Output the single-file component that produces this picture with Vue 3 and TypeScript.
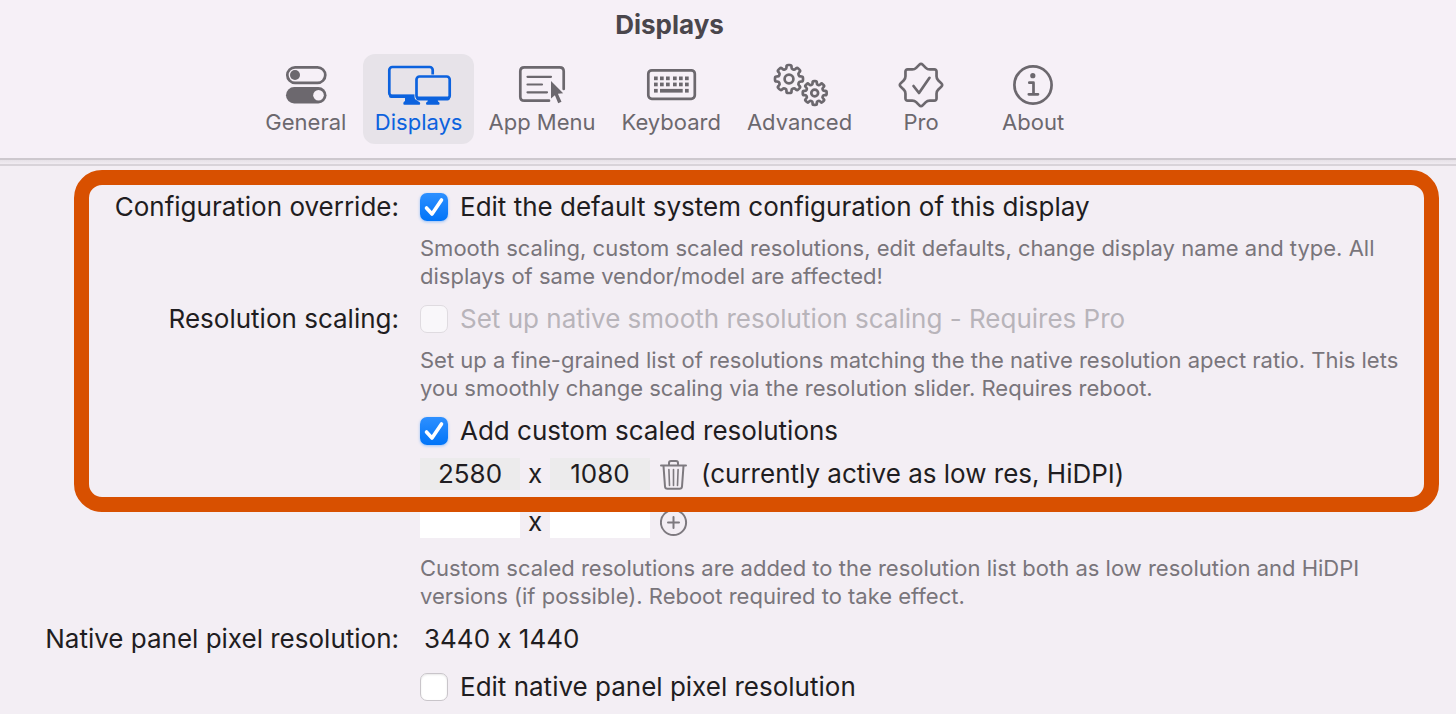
<script setup lang="ts">
import { ref } from 'vue'

type TabId = 'general' | 'displays' | 'menu' | 'keyboard' | 'advanced' | 'pro' | 'about'

const tabs: { id: TabId; label: string }[] = [
  { id: 'general', label: 'General' },
  { id: 'displays', label: 'Displays' },
  { id: 'menu', label: 'App Menu' },
  { id: 'keyboard', label: 'Keyboard' },
  { id: 'advanced', label: 'Advanced' },
  { id: 'pro', label: 'Pro' },
  { id: 'about', label: 'About' },
]

const active = ref<TabId>('displays')
const overrideConfig = ref(true)
const smoothScaling = ref(false)
const customResolutions = ref(true)
const editNative = ref(false)
const width = ref('2580')
const height = ref('1080')
const newWidth = ref('')
const newHeight = ref('')

type Point = [number, number]

const polar = (cx: number, cy: number, r: number, deg: number): Point => {
  const a = (deg * Math.PI) / 180
  return [cx + r * Math.sin(a), cy - r * Math.cos(a)]
}

/* Closed polygon whose corners are rounded by the share t of each edge */
const rounded = (pts: Point[], t: number): string => {
  const n = pts.length
  const mix = (a: Point, b: Point) =>
    `${(a[0] + (b[0] - a[0]) * t).toFixed(2)} ${(a[1] + (b[1] - a[1]) * t).toFixed(2)}`
  return (
    pts
      .map((p, i) => {
        const prev = pts[(i + n - 1) % n]
        const next = pts[(i + 1) % n]
        return `${i ? 'L' : 'M'}${mix(p, prev)}Q${p[0].toFixed(2)} ${p[1].toFixed(2)} ${mix(p, next)}`
      })
      .join('') + 'Z'
  )
}

const gear = (cx: number, cy: number, outer: number, inner: number): string => {
  const pts: Point[] = []
  for (let i = 0; i < 8; i++) {
    const d = i * 45
    pts.push(
      polar(cx, cy, inner, d - 14),
      polar(cx, cy, outer, d - 10),
      polar(cx, cy, outer, d + 10),
      polar(cx, cy, inner, d + 14),
    )
  }
  return rounded(pts, 0.35)
}

const badge = (cx: number, cy: number, outer: number, inner: number): string => {
  const pts: Point[] = []
  for (let i = 0; i < 8; i++) {
    pts.push(polar(cx, cy, outer, i * 45), polar(cx, cy, inner, i * 45 + 22.5))
  }
  return rounded(pts, 0.25)
}

const keyColumns = [16, 22, 28, 35, 41, 47]
</script>

<template>
  <div class="window">
    <header class="toolbar">
      <h1>Displays</h1>
      <nav class="tabs" aria-label="Settings">
        <button
          v-for="tab in tabs"
          :key="tab.id"
          type="button"
          class="tab"
          :class="{ active: active === tab.id }"
          @click="active = tab.id"
        >
          <svg class="tab-icon" viewBox="0 0 66 46" aria-hidden="true">
            <g v-if="tab.id === 'general'">
              <rect class="line" x="14.3" y="5.3" width="38" height="15.6" rx="7.8" />
              <circle class="solid" cx="22" cy="13" r="5" />
              <rect class="solid" x="13" y="25" width="40.5" height="16.4" rx="8.2" />
              <circle class="paper" cx="45.5" cy="33.2" r="5.3" />
            </g>
            <g v-else-if="tab.id === 'displays'">
              <rect class="line" x="3.3" y="5" width="43.4" height="29" rx="3" />
              <path class="solid" d="M3 32.5h27v3.500H5q-2 0-2-2z" />
              <path class="solid" d="M19 35h12l.6 4q2.600.7 2.600 2.300 0 1.500-1 1.500H18.300q-1 0-1-1.500 0-1.600 1.700-2.300z" />
              <rect class="cut" x="28.500" y="12.500" width="37" height="26" rx="4" />
              <rect class="line" x="30.500" y="14.500" width="33.200" height="22.200" rx="3" />
              <path class="solid" d="M30 34.500h34v1q0 3-2.500 3h-29q-2.500 0-2.500-3zM42 37.500h9.500l.5 2q1.600.6 1.600 1.800 0 1.500-1 1.500H41q-1 0-1-1.500 0-1.200 1.600-1.800z" />
            </g>
            <g v-else-if="tab.id === 'menu'">
              <path class="line" d="M40 38.700H15.300q-4 0-4-4V9.300q0-4 4-4h35.400q4 0 4 4V27" />
              <path class="rule" d="M18.500 14.800H42M18.500 22.500H33M18.500 30.300H38" />
              <path class="solid" d="M42 19 54.200 31.300 48.900 31.700 52.500 39.800 49.200 41.300 45.900 33.200 42 36.500z" />
            </g>
            <g v-else-if="tab.id === 'keyboard'">
              <rect class="line" x="10.300" y="8.300" width="46.500" height="28.500" rx="3.500" />
              <template v-for="x in keyColumns" :key="x">
                <rect class="solid" :x="x" y="14.500" width="3.700" height="3.700" />
                <rect class="solid" :x="x" y="20.600" width="3.700" height="3.700" />
              </template>
              <rect class="solid" x="16" y="26.900" width="3.700" height="3.700" />
              <rect class="solid" x="22" y="26.900" width="22.700" height="3.700" />
              <rect class="solid" x="47" y="26.900" width="3.700" height="3.700" />
            </g>
            <g v-else-if="tab.id === 'advanced'">
              <path class="line" :d="gear(22, 17, 14.200, 10.600)" />
              <circle class="line" cx="22" cy="17" r="4.400" />
              <path class="line" :d="gear(47.700, 31, 12.100, 8.800)" />
              <circle class="line" cx="47.700" cy="31" r="3.400" />
            </g>
            <g v-else-if="tab.id === 'pro'">
              <path class="line" :d="badge(33, 23, 22, 16.800)" />
              <path class="line" d="M25.500 24 31 31 41.500 15.800" />
            </g>
            <g v-else>
              <circle class="line" cx="33" cy="23" r="18.600" />
              <circle class="solid" cx="32.800" cy="13.700" r="2.600" />
              <path class="line" d="M29.300 20.700H33.500V32.300M28.800 32.300H38" />
            </g>
          </svg>
          <span>{{ tab.label }}</span>
        </button>
      </nav>
    </header>
    <div class="divider"></div>

    <main>
      <section class="highlight">
        <div class="row">
          <span class="label">Configuration override:</span>
          <div class="content">
            <label class="check">
              <input v-model="overrideConfig" type="checkbox" />
              Edit the default system configuration of this display
            </label>
            <p class="hint">
              Smooth scaling, custom scaled resolutions, edit defaults, change display name and type. All
              displays of same vendor/model are affected!
            </p>
          </div>
        </div>
        <div class="row">
          <span class="label">Resolution scaling:</span>
          <div class="content">
            <label class="check disabled">
              <input v-model="smoothScaling" type="checkbox" disabled />
              Set up native smooth resolution scaling - Requires Pro
            </label>
            <p class="hint">
              Set up a fine-grained list of resolutions matching the the native resolution apect ratio. This lets
              you smoothly change scaling via the resolution slider. Requires reboot.
            </p>
            <label class="check">
              <input v-model="customResolutions" type="checkbox" />
              Add custom scaled resolutions
            </label>
            <div class="fields existing">
              <input v-model="width" type="text" aria-label="Width" readonly />
              <span class="times">x</span>
              <input v-model="height" type="text" aria-label="Height" readonly />
              <button type="button" class="icon-button" aria-label="Remove resolution">
                <svg viewBox="0 0 28 32" aria-hidden="true">
                  <path d="M1 7.500H26M9 7V5Q9 3 11 3H16Q18 3 18 5V7M3.500 8 5 28.500Q5.200 30.800 7.400 30.800H19.600Q21.800 30.800 22 28.500L23.500 8" />
                  <path class="fine" d="M8.900 11.500 9.500 27.500M13.500 11.500V27.500M18.100 11.500 17.500 27.500" />
                </svg>
              </button>
              <span>(currently active as low res, HiDPI)</span>
            </div>
          </div>
        </div>
      </section>

      <div class="row">
        <div class="content">
          <div class="fields">
            <input v-model="newWidth" type="text" aria-label="New width" />
            <span class="times">x</span>
            <input v-model="newHeight" type="text" aria-label="New height" />
            <button type="button" class="icon-button" aria-label="Add resolution">
              <svg viewBox="0 0 28 32" aria-hidden="true">
                <circle cx="13.500" cy="16.500" r="12.600" />
                <path d="M13.500 11V22M8 16.500H19" />
              </svg>
            </button>
          </div>
          <p class="hint spaced">
            Custom scaled resolutions are added to the resolution list both as low resolution and HiDPI
            versions (if possible). Reboot required to take effect.
          </p>
        </div>
      </div>
      <div class="row">
        <span class="label">Native panel pixel resolution:</span>
        <div class="content">
          <div class="value">3440 x 1440</div>
          <label class="check native">
            <input v-model="editNative" type="checkbox" />
            Edit native panel pixel resolution
          </label>
        </div>
      </div>
    </main>
  </div>
</template>

<style>
body {
  background: #f3eef4;
}
</style>

<style scoped>
.window {
  box-sizing: border-box;
  min-height: 100vh;
  background: #f3eef4;
  color: #1f1d21;
  font-family: Inter, 'Liberation Sans', sans-serif;
  font-size: 26px;
  font-variant-ligatures: no-contextual;
  line-height: 32px;
}

.toolbar {
  display: flex;
  flex-direction: column;
  align-items: center;
  padding: 9px 117px 14px 0;
  background: #f6f0f7;
  border-bottom: 2px solid #cdc8ce;
}

h1 {
  margin: 0 0 13px;
  font-size: 26px;
  font-weight: 700;
  line-height: 32px;
  color: #4a464c;
}

.tabs {
  display: flex;
  gap: 2px;
}

.tab {
  --paper: #f6f0f7;
  display: flex;
  flex-direction: column;
  align-items: center;
  min-width: 110px;
  padding: 8px 12px;
  border: 0;
  border-radius: 12px;
  background: none;
  color: #6c686e;
  font: inherit;
  font-size: 22px;
  line-height: 28px;
  white-space: nowrap;
}

.tab.active {
  --paper: #e7e3e9;
  background: #e7e3e9;
  color: #0c62de;
}

.tab-icon {
  width: 66px;
  height: 46px;
  overflow: visible;
}

.line,
.rule {
  fill: none;
  stroke: currentColor;
  stroke-width: 2.7;
  stroke-linecap: round;
  stroke-linejoin: round;
}

.rule {
  stroke-width: 2.2;
}

.solid {
  fill: currentColor;
}

.paper,
.cut {
  fill: var(--paper);
}

.divider {
  height: 4px;
  background: linear-gradient(#e6e1e7, #f0ebf1);
  border-bottom: 2px solid #d8d3d9;
}

main {
  padding: 25px 0 11px;
}

.highlight {
  position: relative;
}

.highlight::after {
  content: '';
  position: absolute;
  inset: -21px 17px -22px 74px;
  border: 15px solid #d85000;
  border-radius: 28px;
  pointer-events: none;
}

.row {
  display: grid;
  grid-template-columns: 399px minmax(0, 1fr);
  column-gap: 21px;
  padding-right: 36px;
}

.label {
  text-align: right;
  white-space: nowrap;
}

.content {
  grid-column: 2;
}

.check {
  display: flex;
  align-items: center;
  gap: 12px;
}

.check input {
  appearance: none;
  flex: none;
  box-sizing: border-box;
  width: 28px;
  height: 28px;
  margin: 0;
  border: 1px solid #c9c5ca;
  border-radius: 7px;
  background: #fff;
  box-shadow: inset 0 1px 2px #00000018;
}

.check input:checked {
  border: 0;
  background:
    url("data:image/svg+xml,%3Csvg xmlns='http://www.w3.org/2000/svg' viewBox='0 0 28 28'%3E%3Cpath d='M6.500 15 12 21 21.500 7' fill='none' stroke='white' stroke-width='3.600' stroke-linecap='round' stroke-linejoin='round'/%3E%3C/svg%3E"),
    linear-gradient(#2e90ff, #0074f8);
  box-shadow: 0 1px 3px #0a7cff66;
}

.check.disabled {
  color: #b8b4ba;
}

.check.disabled input {
  border-color: #dfdbe0;
  background: #f9f7fa;
  box-shadow: none;
}

.check.native {
  margin-top: 16px;
}

.hint {
  margin: 11px 0 13px;
  color: #79757b;
  font-size: 22px;
  line-height: 28px;
}

.hint.spaced {
  margin-top: 16px;
}

.fields {
  display: flex;
  align-items: center;
  height: 32px;
  margin-top: 16px;
}

.fields.existing {
  margin-top: 11px;
}

.fields input {
  box-sizing: border-box;
  width: 100px;
  height: 32px;
  padding: 0;
  border: 0;
  border-radius: 0;
  outline: 0;
  background: #fff;
  color: inherit;
  font: inherit;
  text-align: center;
}

.fields.existing input {
  background: #ecebec;
}

.times {
  width: 30px;
  text-align: center;
}

.icon-button {
  display: flex;
  margin: 0 13px 0 10px;
  padding: 0;
  border: 0;
  background: none;
  color: #7d797f;
}

.icon-button svg {
  width: 28px;
  height: 32px;
  fill: none;
  stroke: currentColor;
  stroke-width: 2;
  stroke-linecap: round;
  stroke-linejoin: round;
}

.icon-button .fine {
  stroke-width: 1.6;
}

.value {
  padding-left: 4px;
}
</style>
